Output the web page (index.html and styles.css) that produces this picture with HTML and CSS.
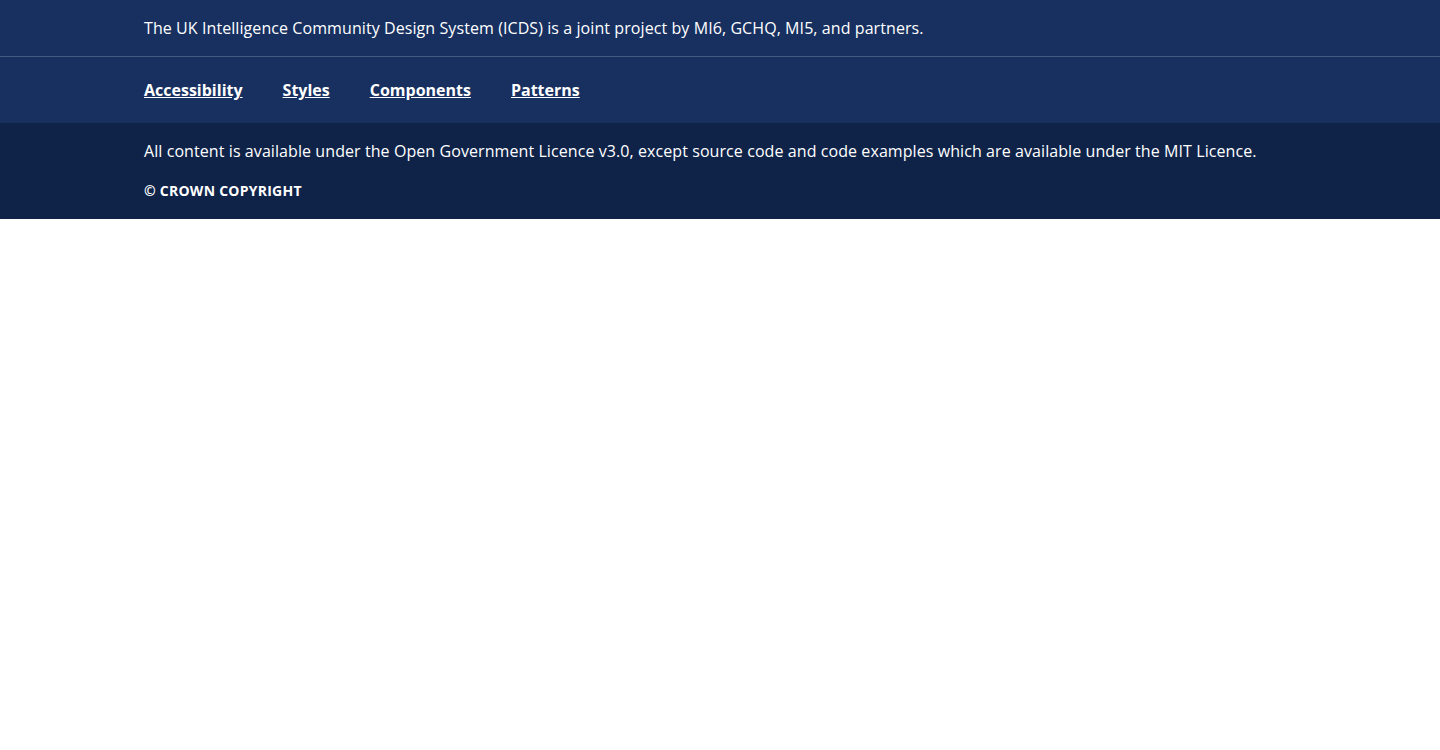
FILE: index.html
```html
<!DOCTYPE html>
<html lang="en">
<head>
<meta charset="utf-8">
<title>ICDS footer</title>
<link rel="stylesheet" href="styles.css">
</head>
<body>
<footer class="footer">
  <div class="footer-top">
    <p class="footer-desc">The UK Intelligence Community Design System (ICDS) is a joint project by MI6, GCHQ, MI5, and partners.</p>
  </div>
  <nav class="footer-nav">
    <a href="#" class="footer-link">Accessibility</a>
    <a href="#" class="footer-link">Styles</a>
    <a href="#" class="footer-link">Components</a>
    <a href="#" class="footer-link">Patterns</a>
  </nav>
  <div class="footer-bottom">
    <p class="footer-licence">All content is available under the Open Government Licence v3.0, except source code and code examples which are available under the MIT Licence.</p>
    <p class="footer-copyright">© Crown Copyright</p>
  </div>
</footer>
</body>
</html>
```
FILE: styles.css
```css
html, body {
  margin: 0;
  padding: 0;
  background: #ffffff;
}
body {
  font-family: "Open Sans", "Noto Sans", sans-serif;
  color: #ffffff;
}
.footer-top {
  background: #17305f;
  padding: 16px 144px;
  border-bottom: 1px solid #44597f;
}
.footer-desc {
  margin: 0;
  font-size: 16px;
  line-height: 24px;
  letter-spacing: 0.08px;
}
.footer-nav {
  background: #17305f;
  padding: 21px 144px;
  display: flex;
  gap: 40px;
}
.footer-link {
  color: #ffffff;
  font-weight: 700;
  font-size: 16px;
  line-height: 24px;
  text-decoration: underline;
}
.footer-bottom {
  background: #0f2349;
  padding: 16px 144px 18px;
}
.footer-licence {
  margin: 0;
  font-size: 16px;
  line-height: 24px;
  letter-spacing: 0.08px;
}
.footer-copyright {
  margin: 18px 0 0;
  font-size: 14px;
  line-height: 20px;
  font-weight: 700;
  text-transform: uppercase;
  letter-spacing: 0.25px;
}
```
